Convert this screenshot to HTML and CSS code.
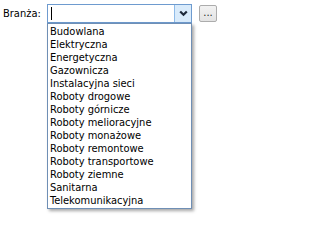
FILE: index.html
```html
<!DOCTYPE html>
<html>
<head>
<meta charset="utf-8">
<link rel="stylesheet" href="styles.css">
</head>
<body>
<div class="row">
  <span class="label">Branża:</span>
  <div class="combo">
    <div class="input"><span class="caret"></span></div>
    <div class="arrow">
      <svg width="9" height="7" viewBox="0 0 9 7"><path d="M1.2 1.5 L4.5 4.8 L7.8 1.5" fill="none" stroke="#1e2a3a" stroke-width="2.2"/></svg>
    </div>
    <ul class="list">
      <li>Budowlana</li>
      <li>Elektryczna</li>
      <li>Energetyczna</li>
      <li>Gazownicza</li>
      <li>Instalacyjna sieci</li>
      <li>Roboty drogowe</li>
      <li>Roboty górnicze</li>
      <li>Roboty melioracyjne</li>
      <li>Roboty monażowe</li>
      <li>Roboty remontowe</li>
      <li>Roboty transportowe</li>
      <li>Roboty ziemne</li>
      <li>Sanitarna</li>
      <li>Telekomunikacyjna</li>
    </ul>
  </div>
  <div class="dots">...</div>
</div>
</body>
</html>
```

FILE: styles.css
```css
html, body {
  margin: 0;
  padding: 0;
  background: #ffffff;
  width: 222px;
  height: 215px;
  overflow: hidden;
}
body {
  font-family: "DejaVu Sans Condensed", "DejaVu Sans", sans-serif;
  font-size: 11px;
  color: #000;
}
.row {
  display: flex;
  align-items: flex-start;
  padding-top: 4px;
}
.label {
  width: 47px;
  padding-left: 3px;
  box-sizing: border-box;
  line-height: 19px;
}
.combo {
  position: relative;
  width: 145px;
  height: 19px;
  box-sizing: border-box;
  border: 1px solid #6e9bcf;
  display: flex;
  background: #fff;
}
.input {
  flex: 1;
  position: relative;
}
.caret {
  position: absolute;
  left: 3px;
  top: 2px;
  width: 1px;
  height: 13px;
  background: #000;
}
.arrow {
  width: 16px;
  background: #d9ebfb;
  border-left: 1px solid #8fbbe8;
  display: flex;
  align-items: center;
  justify-content: center;
}
.list {
  position: absolute;
  left: -1px;
  top: 18px;
  width: 145px;
  box-sizing: border-box;
  margin: 0;
  padding: 1px 0 1px 0;
  list-style: none;
  background: #fff;
  border: 1px solid #6f8fb5;
  box-shadow: 2px 2px 3px rgba(0,0,0,0.35);
}
.list li {
  height: 13px;
  line-height: 13px;
  padding-left: 2px;
  white-space: nowrap;
}
.dots {
  margin-left: 7px;
  margin-top: 1px;
  width: 18px;
  height: 17px;
  box-sizing: border-box;
  border: 1px solid #acacac;
  background: linear-gradient(#f2f2f2, #e3e3e3);
  border-radius: 2px;
  text-align: center;
  line-height: 14px;
  font-size: 11px;
  color: #222;
}
```
